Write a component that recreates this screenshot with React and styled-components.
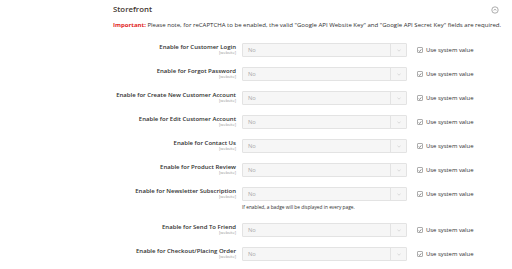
import React from "react";
import styled, { createGlobalStyle } from "styled-components";

const GlobalStyle = createGlobalStyle`
  body {
    margin: 0;
    background: #ffffff;
    font-family: "Open Sans", "Noto Sans", sans-serif;
    color: #303030;
  }
`;

const rows = [
  { label: "Enable for Customer Login" },
  { label: "Enable for Forgot Password" },
  { label: "Enable for Create New Customer Account" },
  { label: "Enable for Edit Customer Account" },
  { label: "Enable for Contact Us" },
  { label: "Enable for Product Review" },
  {
    label: "Enable for Newsletter Subscription",
    note: "If enabled, a badge will be displayed in every page.",
  },
  { label: "Enable for Send To Friend" },
  { label: "Enable for Checkout/Placing Order" },
];

const App = () => {
  return (
    <>
      <GlobalStyle />
      <Section>
        <Header>
          <Title>Storefront</Title>
          <Collapse>
            <svg width="8" height="8" viewBox="0 0 8 8">
              <circle cx="4" cy="4" r="3.2" fill="none" stroke="#777" strokeWidth="0.6" />
              <path d="M2.6 4.3 L4 3.3 L5.4 4.3" fill="none" stroke="#777" strokeWidth="0.6" />
            </svg>
          </Collapse>
        </Header>
        <Notice>
          <strong>Important:</strong> Please note, for reCAPTCHA to be enabled, the valid
          "Google API Website Key" and "Google API Secret Key" fields are required.
        </Notice>
        <Fields>
          {rows.map((r) => (
            <Row key={r.label} hasNote={!!r.note}>
              <Label>
                <span>{r.label}</span>
                <Scope>[website]</Scope>
              </Label>
              <Control>
                <Select>
                  <Value>No</Value>
                  <Arrow>
                    <svg width="4" height="3" viewBox="0 0 4 3">
                      <path d="M0.5 0.8 L2 2.2 L3.5 0.8" fill="none" stroke="#bbb" strokeWidth="0.5" />
                    </svg>
                  </Arrow>
                </Select>
                {r.note && <Note>{r.note}</Note>}
              </Control>
              <UseDefault>
                <Check>
                  <svg width="5" height="5" viewBox="0 0 5 5">
                    <path d="M0.9 2.6 L2 3.7 L4.1 1.1" fill="none" stroke="#303030" strokeWidth="0.7" />
                  </svg>
                </Check>
                Use system value
              </UseDefault>
            </Row>
          ))}
        </Fields>
      </Section>
    </>
  );
};

export default App;

const Section = styled.div`
  padding: 4px 13px 0 113px;
  width: 512px;
  box-sizing: border-box;
`;

const Header = styled.div`
  display: flex;
  justify-content: space-between;
  align-items: flex-start;
  height: 10px;
`;

const Title = styled.div`
  font-size: 7.8px;
  font-weight: 600;
  line-height: 10px;
  color: #41362f;
`;

const Collapse = styled.div`
  display: flex;
  margin-top: 2px;
  margin-right: 0;
`;

const Notice = styled.div`
  margin-top: 7px;
  font-size: 6.05px;
  line-height: 8px;
  color: #303030;
  white-space: nowrap;

  strong {
    color: #e22626;
    font-weight: 700;
  }
`;

const Fields = styled.div`
  margin-top: 14px;
`;

const Row = styled.div`
  display: grid;
  grid-template-columns: 123px 165px auto;
  column-gap: 6px;
  align-items: start;
  height: ${(p) => (p.hasNote ? "36px" : "24px")};
`;

const Label = styled.div`
  display: flex;
  flex-direction: column;
  align-items: flex-end;
  text-align: right;
  font-size: 6px;
  font-weight: 600;
  line-height: 8px;
  color: #303030;
  white-space: nowrap;
`;

const Scope = styled.span`
  font-size: 4px;
  font-weight: 400;
  line-height: 4px;
  color: #999;
`;

const Control = styled.div`
  display: flex;
  flex-direction: column;
`;

const Select = styled.div`
  display: flex;
  height: 14px;
  box-sizing: border-box;
  border: 0.6px solid #e3e3e3;
  border-radius: 1px;
  background: #f6f6f6;
`;

const Value = styled.div`
  flex: 1;
  padding-left: 5px;
  font-size: 5.8px;
  line-height: 13px;
  color: #aaa;
`;

const Arrow = styled.div`
  width: 15px;
  border-left: 0.6px solid #e3e3e3;
  display: flex;
  align-items: center;
  justify-content: center;
`;

const Note = styled.div`
  margin-top: 3px;
  font-size: 4.8px;
  line-height: 6px;
  color: #303030;
  white-space: nowrap;
`;

const UseDefault = styled.label`
  display: flex;
  align-items: center;
  gap: 3px;
  height: 14px;
  margin-left: 4px;
  font-size: 5.9px;
  color: #303030;
  white-space: nowrap;
`;

const Check = styled.span`
  display: flex;
  align-items: center;
  justify-content: center;
  width: 6px;
  height: 6px;
  box-sizing: border-box;
  border: 0.6px solid #adadad;
  border-radius: 1px;
  background: #fff;
`;
